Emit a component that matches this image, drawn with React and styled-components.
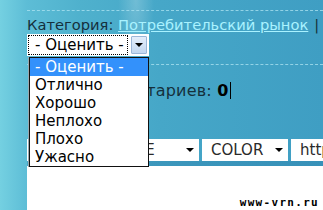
import React from "react";
import styled, { createGlobalStyle } from "styled-components";

const GlobalStyle = createGlobalStyle`
  html, body {
    margin: 0;
    padding: 0;
  }
  body {
    width: 323px;
    height: 210px;
    overflow: hidden;
    font-family: "DejaVu Sans", Verdana, sans-serif;
  }
`;

const Page = styled.div`
  position: relative;
  height: 210px;
  box-sizing: border-box;
  padding-left: 27px;
  display: flex;
  flex-direction: column;
  overflow: hidden;
  background:
    radial-gradient(ellipse 18px 70px at 136px 0, rgba(255, 255, 255, 0.22), transparent),
    linear-gradient(90deg, #74d0e1 0, #5dbdd6 27px, #4fb1cd 80px, #46a7c8 160px, #3f9ec3 100%);
`;

const Divider = styled.div`
  margin-top: ${(p) => p.$top}px;
  border-top: 1px dashed rgba(175, 228, 242, 0.75);
`;

const TextLine = styled.div`
  margin-top: ${(p) => p.$top}px;
  font-size: ${(p) => p.$size}px;
  letter-spacing: ${(p) => p.$spacing || 0}px;
  line-height: 18px;
  color: #15303c;
  white-space: nowrap;
`;

const CategoryLink = styled.a`
  color: #a9f2ff;
  text-decoration: underline;
`;

const Separator = styled.span`
  margin-left: 6px;
  color: #15303c;
`;

const Select = styled.div`
  display: flex;
  align-items: center;
  gap: 3px;
  width: 122px;
  height: 22px;
  box-sizing: border-box;
  padding: 1px 2px 1px 1px;
  background: #fff;
`;

const SelectValue = styled.div`
  flex: 1;
  height: 100%;
  box-sizing: border-box;
  border: 1px dotted #000;
  padding-left: 6px;
  font-size: 15px;
  line-height: 18px;
  color: #000;
  white-space: nowrap;
`;

const SelectButton = styled.div`
  width: 16px;
  height: 18px;
  box-sizing: border-box;
  border: 1px solid #9bb6d8;
  border-radius: 1px;
  background: linear-gradient(#e4eefb, #c2d7f0);
  display: flex;
  align-items: center;
  justify-content: center;
`;

const Arrow = styled.span`
  width: 0;
  height: 0;
  border-left: ${(p) => p.$size}px solid transparent;
  border-right: ${(p) => p.$size}px solid transparent;
  border-top: ${(p) => p.$size}px solid #000;
`;

const OptionList = styled.ul`
  position: absolute;
  top: 57px;
  left: 29px;
  width: 120px;
  margin: 0;
  padding: 0;
  list-style: none;
  box-sizing: border-box;
  border: 1px solid #111;
  background: #fff;
  box-shadow: -1px 0 0 #9aa9b0;
  z-index: 2;
`;

const Option = styled.li`
  height: 18px;
  padding-left: 5px;
  font-size: 15px;
  line-height: 18px;
  color: ${(p) => (p.$active ? "#fff" : "#000")};
  background: ${(p) => (p.$active ? "#3391fb" : "transparent")};
  white-space: nowrap;
`;

const Count = styled.b`
  color: #000;
`;

const Caret = styled.span`
  display: inline-block;
  width: 1px;
  height: 17px;
  margin-left: 1px;
  vertical-align: -3px;
  background: #000;
`;

const Toolbar = styled.div`
  margin-top: 39px;
  padding-bottom: 5px;
  display: flex;
  gap: 3px;
  background: linear-gradient(transparent 22px, rgba(40, 120, 165, 0.35) 22px);
`;

const ToolBox = styled.div`
  flex: ${(p) => (p.$width ? `0 0 ${p.$width}px` : "1")};
  height: 22px;
  box-sizing: border-box;
  padding: 0 5px 0 9px;
  display: flex;
  align-items: center;
  justify-content: space-between;
  background: #fff;
  font-size: 15px;
  color: #2a2a2a;
  white-space: nowrap;
  overflow: hidden;
`;

const Editor = styled.div`
  flex: 1;
  background: #fff;
`;

const Watermark = styled.div`
  position: absolute;
  right: 4px;
  bottom: 2px;
  font-family: "DejaVu Sans Mono", monospace;
  font-weight: bold;
  font-size: 11px;
  line-height: 10px;
  letter-spacing: 1.3px;
  color: #000;
  text-shadow: 1px 0 #fff, -1px 0 #fff, 0 1px #fff, 0 -1px #fff;
  z-index: 3;
`;

const ratings = ["- Оценить -", "Отлично", "Хорошо", "Неплохо", "Плохо", "Ужасно"];

export default function App() {
  return (
    <>
      <GlobalStyle />
      <Page>
        <Divider $top={10} />
        <TextLine $top={5} $size={14.7}>
          Категория: <CategoryLink href="#">Потребительский рынок</CategoryLink>
          <Separator>|</Separator>
        </TextLine>
        <Select>
          <SelectValue>- Оценить -</SelectValue>
          <SelectButton>
            <Arrow $size={4} />
          </SelectButton>
        </Select>
        <Divider $top={8} />
        <TextLine $top={17} $size={16} $spacing={0.2}>
          Всего комментариев: <Count>0</Count>
          <Caret />
        </TextLine>
        <Toolbar>
          <ToolBox $width={82}>
            FONT <Arrow $size={4} />
          </ToolBox>
          <ToolBox $width={87}>
            SIZE <Arrow $size={4} />
          </ToolBox>
          <ToolBox $width={86}>
            COLOR <Arrow $size={4} />
          </ToolBox>
          <ToolBox>http://</ToolBox>
        </Toolbar>
        <Editor />
        <OptionList>
          {ratings.map((r, i) => (
            <Option key={r} $active={i === 0}>
              {r}
            </Option>
          ))}
        </OptionList>
        <Watermark>www-vrn.ru</Watermark>
      </Page>
    </>
  );
}
